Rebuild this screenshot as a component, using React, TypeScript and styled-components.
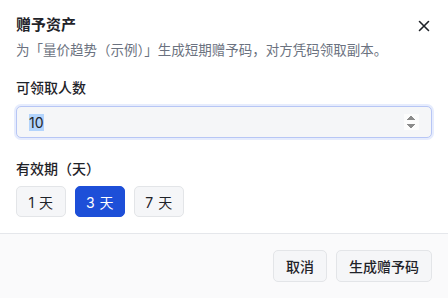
import React, { useEffect, useRef, useState } from "react";
import styled, { createGlobalStyle } from "styled-components";

const Global = createGlobalStyle`
  html, body { margin: 0; padding: 0; background: #ffffff; }
  body { font-family: Inter, "Noto Sans CJK SC", sans-serif; }
  * { box-sizing: border-box; }
`;

const Dialog = styled.div`
  width: 448px;
  height: 298px;
  display: flex;
  flex-direction: column;
  background: #ffffff;
  overflow: hidden;
  color: #1f2329;
`;

const Body = styled.div`
  flex: 1;
  padding: 14px 16px 0 16px;
  display: flex;
  flex-direction: column;
`;

const Header = styled.div`
  display: flex;
  align-items: center;
  justify-content: space-between;
  height: 22px;
`;

const Title = styled.h2`
  margin: 0;
  font-size: 15px;
  font-weight: 600;
  line-height: 22px;
  color: #1f2329;
`;

const Close = styled.button`
  border: none;
  background: transparent;
  padding: 0;
  width: 16px;
  height: 16px;
  display: flex;
  align-items: center;
  justify-content: center;
  color: #1f2329;
  margin-top: 2px;
`;

const Desc = styled.p`
  margin: 4px 0 0 0;
  font-size: 13.5px;
  line-height: 20px;
  color: #6b7280;
`;

const Label = styled.div<{ $top: number }>`
  margin-top: ${(p) => p.$top}px;
  font-size: 14px;
  font-weight: 500;
  line-height: 20px;
  color: #1f2329;
`;

const Input = styled.input`
  margin-top: 8px;
  width: 100%;
  height: 32px;
  border: 1px solid #b7c6f5;
  border-radius: 5px;
  background: #f5f6f8;
  box-shadow: 0 0 0 2px #e6ecfd;
  padding: 0 12px;
  font-family: Inter, "Noto Sans CJK SC", sans-serif;
  font-size: 14px;
  color: #1f2329;
  outline: none;
  &::selection { background: #b3d4fc; color: #1f2329; }
  &::-webkit-inner-spin-button { opacity: 1; }
`;

const Options = styled.div`
  display: flex;
  gap: 9px;
  margin-top: 7px;
`;

const Option = styled.button<{ $active?: boolean }>`
  height: 31px;
  width: 50px;
  padding: 0;
  border-radius: 5px;
  border: 1px solid ${(p) => (p.$active ? "#1d4ed8" : "#e3e5e8")};
  background: ${(p) => (p.$active ? "#1d4fd8" : "#f5f6f8")};
  color: ${(p) => (p.$active ? "#ffffff" : "#1f2329")};
  font-family: Inter, "Noto Sans CJK SC", sans-serif;
  font-size: 14px;
  letter-spacing: 0.5px;
  display: flex;
  align-items: center;
  justify-content: center;
`;

const Footer = styled.div`
  height: 65px;
  border-top: 1px solid #e5e7eb;
  background: #fafafb;
  display: flex;
  justify-content: flex-end;
  align-items: flex-start;
  gap: 9px;
  padding: 16px 16px 0 16px;
`;

const FooterButton = styled.button`
  height: 32px;
  padding: 0 12px;
  border-radius: 5px;
  border: 1px solid #e3e5e8;
  background: #f5f6f8;
  color: #1f2329;
  font-family: Inter, "Noto Sans CJK SC", sans-serif;
  font-size: 14px;
  font-weight: 500;
`;

export default function App() {
  const [days, setDays] = useState(3);
  const ref = useRef<HTMLInputElement>(null);
  useEffect(() => {
    if (ref.current) {
      ref.current.focus();
      ref.current.select();
    }
  }, []);
  return (
    <>
      <Global />
      <Dialog>
        <Body>
          <Header>
            <Title>赠予资产</Title>
            <Close aria-label="关闭">
              <svg width="12" height="12" viewBox="0 0 12 12">
                <path d="M1.5 1.5 L10.5 10.5 M10.5 1.5 L1.5 10.5" stroke="#1f2329" strokeWidth="1.6" strokeLinecap="round" />
              </svg>
            </Close>
          </Header>
          <Desc>为「量价趋势（示例）」生成短期赠予码，对方凭码领取副本。</Desc>
          <Label $top={18}>可领取人数</Label>
          <Input ref={ref} type="number" defaultValue={10} />
          <Label $top={21}>有效期（天）</Label>
          <Options>
            {[1, 3, 7].map((d) => (
              <Option key={d} $active={d === days} onClick={() => setDays(d)}>
                {d} 天
              </Option>
            ))}
          </Options>
        </Body>
        <Footer>
          <FooterButton>取消</FooterButton>
          <FooterButton>生成赠予码</FooterButton>
        </Footer>
      </Dialog>
    </>
  );
}
